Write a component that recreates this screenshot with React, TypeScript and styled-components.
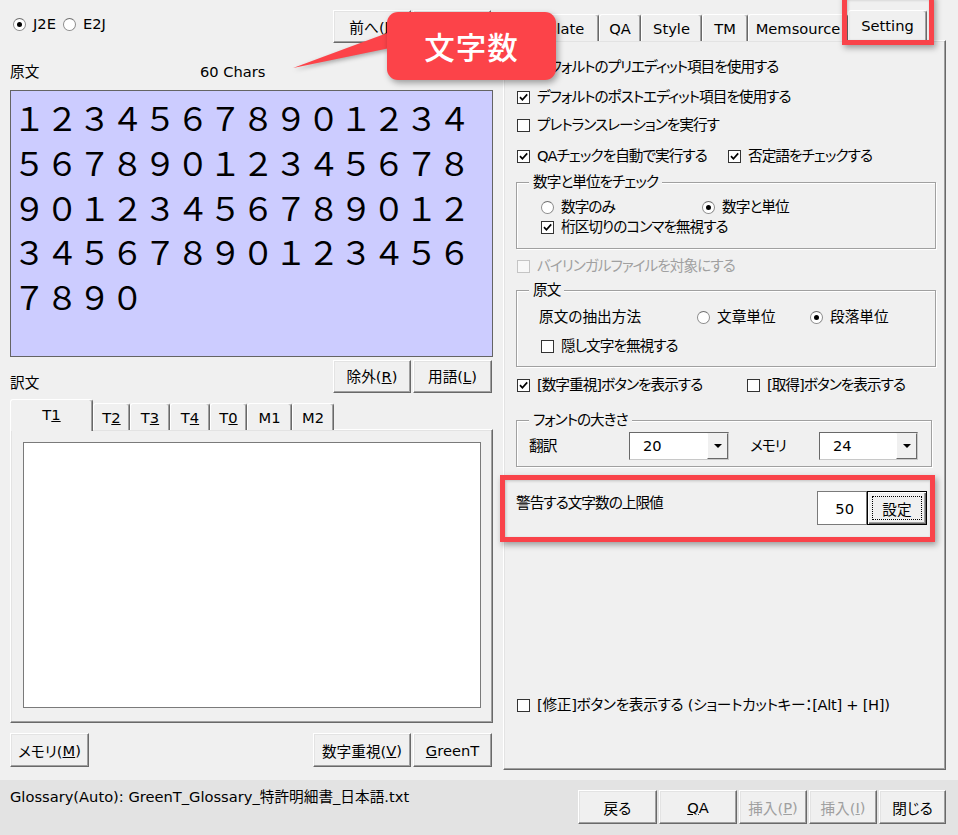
import styled, { createGlobalStyle } from 'styled-components'

const UI = `"DejaVu Sans", "Noto Sans CJK JP", sans-serif`

const GlobalStyle = createGlobalStyle`
  * { box-sizing: border-box; }
  body {
    margin: 0;
    background: #f0f0f0;
    font-family: ${UI};
    font-size: 14.67px;
    color: #000;
    font-feature-settings: "palt";
  }
`

const Root = styled.div`
  position: relative;
  width: 958px;
  height: 835px;
  overflow: hidden;
  display: flex;
  flex-direction: column;
`
const Main = styled.div`
  display: flex;
  gap: 10px;
  height: 780px;
  padding-left: 10px;
`
const LeftCol = styled.div`
  width: 483px;
  display: flex;
  flex-direction: column;
`
const TopBar = styled.div`
  height: 44px;
  padding-top: 10px;
  display: flex;
  justify-content: space-between;
  align-items: flex-start;
`
const RadioGroup = styled.div`
  display: flex;
  gap: 7px;
  margin: 4px 0 0 3px;
`
const Option = styled.label<{ $disabled?: boolean }>`
  display: flex;
  align-items: center;
  gap: 7px;
  height: 20px;
  line-height: 20px;
  white-space: nowrap;
  color: ${p => (p.$disabled ? '#a0a0a0' : '#000')};
`
const RadioCircle = styled.span<{ $on?: boolean }>`
  width: 13px;
  height: 13px;
  flex: none;
  border-radius: 50%;
  border: 1px solid #8c8c8c;
  border-top-color: #6e6e6e;
  background: #fff;
  display: inline-flex;
  align-items: center;
  justify-content: center;
  &::after {
    content: '';
    width: 5px;
    height: 5px;
    border-radius: 50%;
    background: ${p => (p.$on ? '#000' : 'transparent')};
  }
`
const Box = styled.span<{ $disabled?: boolean }>`
  width: 13px;
  height: 13px;
  flex: none;
  border: 1px solid ${p => (p.$disabled ? '#c4c4c4' : '#333')};
  background: ${p => (p.$disabled ? '#f7f7f7' : '#fff')};
  display: inline-flex;
  align-items: center;
  justify-content: center;
`
const ButtonRow = styled.div<{ $mr?: number; $mt?: number }>`
  display: flex;
  gap: 2px;
  margin-right: ${p => p.$mr ?? 0}px;
  margin-top: ${p => p.$mt ?? 0}px;
`
const Button = styled.button<{ $w: number; $h?: number; $off?: boolean }>`
  width: ${p => p.$w}px;
  height: ${p => p.$h ?? 33}px;
  margin: 0;
  padding: 0;
  font: inherit;
  font-feature-settings: "palt";
  color: ${p => (p.$off ? '#a0a0a0' : '#000')};
  background: #f0f0f0;
  border: 1px solid;
  border-color: #fff #696969 #696969 #fff;
  box-shadow: inset -1px -1px 0 #a0a0a0, inset 1px 1px 0 #e3e3e3;
  display: flex;
  align-items: center;
  justify-content: center;
  white-space: nowrap;
`
const DefaultButton = styled(Button)`
  position: relative;
  border: 1px solid #000;
  box-shadow: inset 1px 1px 0 #fff, inset -1px -1px 0 #696969, inset -2px -2px 0 #a0a0a0;
  &::after {
    content: '';
    position: absolute;
    inset: 4px;
    border: 1px dotted #000;
  }
`
const SourceHeader = styled.div`
  margin-top: 18px;
  display: grid;
  grid-template-columns: 190px 1fr;
  line-height: 20px;
`
const SourceBox = styled.div`
  margin-top: 8px;
  height: 267px;
  background: #ccccff;
  border: 1px solid #646464;
  padding: 4px 2px;
  font-family: "Noto Sans CJK JP", sans-serif;
  font-size: 32.7px;
  line-height: 44.8px;
  font-feature-settings: normal;
  word-break: break-all;
`
const TargetHeader = styled.div`
  margin-top: 3px;
  display: flex;
  justify-content: space-between;
  align-items: flex-end;
  line-height: 20px;
`
const TabStrip = styled.div<{ $h: number }>`
  height: ${p => p.$h}px;
  display: flex;
  align-items: flex-end;
  position: relative;
  z-index: 1;
  margin-bottom: -1px;
`
const Tab = styled.div<{ $w: number; $active?: boolean; $h: number }>`
  width: ${p => p.$w}px;
  height: ${p => (p.$active ? p.$h + 5 : p.$h)}px;
  margin-bottom: ${p => (p.$active ? -1 : 0)}px;
  flex: none;
  display: flex;
  align-items: center;
  justify-content: center;
  background: #f0f0f0;
  border-top: 1px solid #fff;
  border-left: 1px solid #fff;
  border-right: 1px solid #696969;
  box-shadow: inset -1px 0 0 #a0a0a0;
  border-radius: 3px 3px 0 0;
  white-space: nowrap;
  padding-bottom: ${p => (p.$active ? 2 : 0)}px;
`
const Raised = styled.div`
  border: 1px solid;
  border-color: #fff #696969 #696969 #fff;
  box-shadow: inset -1px -1px 0 #a0a0a0, inset 1px 1px 0 #e3e3e3;
`
const TabPanel = styled(Raised)`
  height: 294px;
  padding: 12px 11px 14px 12px;
`
const TextArea = styled.div`
  height: 100%;
  background: #fff;
  border: 1px solid #7a7a7a;
`
const BottomButtons = styled.div`
  margin-top: 10px;
  display: flex;
  justify-content: space-between;
`
const RightCol = styled.div`
  width: 443px;
  display: flex;
  flex-direction: column;
`
const SettingPanel = styled(Raised)`
  height: 730px;
  padding: 0 0 54px 13px;
  display: flex;
  flex-direction: column;
  letter-spacing: -1px;
`
const Row = styled.div<{ $mt?: number; $cols?: string; $ls?: number }>`
  margin-top: ${p => p.$mt ?? 0}px;
  display: grid;
  grid-template-columns: ${p => p.$cols ?? '1fr'};
  align-items: center;
  height: 20px;
  ${p => (p.$ls !== undefined ? `letter-spacing: ${p.$ls}px;` : '')}
`
const Group = styled.fieldset<{ $mt: number; $w: number }>`
  margin: ${p => p.$mt}px 0 0 -1px;
  padding: 0;
  min-width: 0;
  width: ${p => p.$w}px;
  border: 1px solid #a0a0a0;
  box-shadow: 1px 1px 0 #fff, inset 1px 1px 0 #fff;
`
const Legend = styled.legend`
  margin-left: 12px;
  padding: 0 4px;
  line-height: 20px;
  background: #f0f0f0;
`
const GroupBody = styled.div<{ $pad: string }>`
  padding: ${p => p.$pad};
`
const Label = styled.span`
  line-height: 20px;
  white-space: nowrap;
`
const SelectRow = styled.div`
  display: grid;
  grid-template-columns: 100px 100px 90px 99px;
  align-items: center;
  & > :nth-child(3) { margin-left: 21px; }
`
const SelectBox = styled.div<{ $w: number }>`
  width: ${p => p.$w}px;
  height: 28px;
  background: #fff;
  border: 1px solid;
  border-color: #696969 #c8c8c8 #c8c8c8 #696969;
  display: flex;
  align-items: center;
  padding-left: 13px;
  letter-spacing: 0;
`
const SelectValue = styled.span`
  flex: 1;
  line-height: 20px;
`
const SelectArrow = styled.span`
  width: 21px;
  height: 100%;
  background: #f0f0f0;
  border: 1px solid;
  border-color: #f0f0f0 #696969 #696969 #fff;
  display: flex;
  align-items: center;
  justify-content: center;
  &::after {
    content: '';
    border-left: 4px solid transparent;
    border-right: 4px solid transparent;
    border-top: 4px solid #000;
  }
`
const WarnRow = styled.div`
  margin: 24px 18px 0 -1px;
  display: flex;
  align-items: flex-start;
`
const WarnText = styled.span`
  flex: 1;
  line-height: 20px;
  margin-top: 2px;
`
const NumberInput = styled.div`
  width: 50px;
  height: 34px;
  background: #fff;
  border: 1px solid #7a7a7a;
  display: flex;
  align-items: center;
  justify-content: flex-end;
  padding-right: 12px;
  letter-spacing: 0;
`
const Spacer = styled.div`
  flex: 1;
`
const StatusBar = styled.div`
  height: 55px;
  background: #e3e3e3;
  display: flex;
  align-items: flex-start;
  padding: 7px 12px 0 10px;
`
const StatusText = styled.div`
  flex: 1;
  line-height: 20px;
`
const Callout = styled.div`
  position: absolute;
  z-index: 10;
  left: 387px;
  top: 12px;
  width: 169px;
  height: 68px;
  border-radius: 11px;
  background: #fc4349;
  box-shadow: 2px 3px 6px rgba(0, 0, 0, 0.35);
  color: #fff;
  font-family: "Noto Sans CJK JP", sans-serif;
  font-size: 30.5px;
  font-weight: 500;
  display: flex;
  align-items: center;
  justify-content: center;
  letter-spacing: 1px;
`
const Pointer = styled.svg`
  position: absolute;
  z-index: 10;
  left: 290px;
  top: 28px;
  filter: drop-shadow(1px 2px 2px rgba(0, 0, 0, 0.3));
`
const Highlight = styled.div<{ $x: number; $y: number; $w: number; $h: number }>`
  position: absolute;
  z-index: 10;
  left: ${p => p.$x}px;
  top: ${p => p.$y}px;
  width: ${p => p.$w}px;
  height: ${p => p.$h}px;
  border: 5px solid #f9434a;
  box-shadow: 2px 3px 6px rgba(0, 0, 0, 0.35), inset 1px 1px 3px rgba(0, 0, 0, 0.2);
`

function Check({ on, disabled }: { on?: boolean; disabled?: boolean }) {
  return (
    <Box $disabled={disabled}>
      {on && (
        <svg width="11" height="11" viewBox="0 0 11 11">
          <path d="M2 5.2 L4.4 7.8 L9.2 2.4" fill="none" stroke="#000" strokeWidth="1.7" />
        </svg>
      )}
    </Box>
  )
}

function CheckOption({ on, disabled, children }: { on?: boolean; disabled?: boolean; children: React.ReactNode }) {
  return (
    <Option $disabled={disabled}>
      <Check on={on} disabled={disabled} />
      {children}
    </Option>
  )
}

function RadioOption({ on, children }: { on?: boolean; children: React.ReactNode }) {
  return (
    <Option>
      <RadioCircle $on={on} />
      {children}
    </Option>
  )
}

function Select({ value, w }: { value: string; w: number }) {
  return (
    <SelectBox $w={w}>
      <SelectValue>{value}</SelectValue>
      <SelectArrow />
    </SelectBox>
  )
}

const SOURCE = '１２３４５６７８９０'.repeat(6)

const topTabs = [
  { label: 'Translate', w: 96 },
  { label: 'QA', w: 42 },
  { label: 'Style', w: 61 },
  { label: 'TM', w: 46 },
  { label: 'Memsource', w: 100 },
  { label: 'Setting', w: 79, active: true },
]

const targetTabs = [
  { t: 'T', k: '1', w: 83, active: true },
  { t: 'T', k: '2', w: 37 },
  { t: 'T', k: '3', w: 40 },
  { t: 'T', k: '4', w: 40 },
  { t: 'T', k: '0', w: 37 },
  { t: 'M1', k: '', w: 45 },
  { t: 'M2', k: '', w: 42 },
]

export default function App() {
  return (
    <Root>
      <GlobalStyle />
      <Main>
        <LeftCol>
          <TopBar>
            <RadioGroup>
              <RadioOption on>J2E</RadioOption>
              <RadioOption>E2J</RadioOption>
            </RadioGroup>
            <ButtonRow $mr={2}>
              <Button $w={78}>前へ(<u>J</u>)</Button>
              <Button $w={78}>次へ(<u>K</u>)</Button>
            </ButtonRow>
          </TopBar>

          <SourceHeader>
            <Label>原文</Label>
            <Label>60 Chars</Label>
          </SourceHeader>
          <SourceBox>{SOURCE}</SourceBox>

          <TargetHeader>
            <Label>訳文</Label>
            <ButtonRow $mr={1}>
              <Button $w={78}>除外(<u>R</u>)</Button>
              <Button $w={79}>用語(<u>L</u>)</Button>
            </ButtonRow>
          </TargetHeader>

          <TabStrip $h={37}>
            {targetTabs.map(tab => (
              <Tab key={tab.t + tab.k} $w={tab.w} $h={27} $active={tab.active}>
                {tab.t}
                {tab.k && <u>{tab.k}</u>}
              </Tab>
            ))}
          </TabStrip>
          <TabPanel>
            <TextArea />
          </TabPanel>

          <BottomButtons>
            <Button $w={79} $h={34}>メモリ(<u>M</u>)</Button>
            <ButtonRow $mr={1}>
              <Button $w={98} $h={34}>数字重視(<u>V</u>)</Button>
              <Button $w={79} $h={34}><u>G</u>reenT</Button>
            </ButtonRow>
          </BottomButtons>
        </LeftCol>

        <RightCol>
          <TabStrip $h={41}>
            {topTabs.map(tab => (
              <Tab key={tab.label} $w={tab.w} $h={27} $active={tab.active}>
                {tab.label}
              </Tab>
            ))}
          </TabStrip>
          <SettingPanel>
            <Row $mt={16}>
              <CheckOption on>デフォルトのプリエディット項目を使用する</CheckOption>
            </Row>
            <Row $mt={10}>
              <CheckOption on>デフォルトのポストエディット項目を使用する</CheckOption>
            </Row>
            <Row $mt={8}>
              <CheckOption>プレトランスレーションを実行す</CheckOption>
            </Row>
            <Row $mt={11} $cols="211px 1fr">
              <CheckOption on>QAチェックを自動で実行する</CheckOption>
              <CheckOption on>否定語をチェックする</CheckOption>
            </Row>

            <Group $mt={6} $w={420}>
              <Legend>数字と単位をチェック</Legend>
              <GroupBody $pad="5px 0 11px 24px">
                <Row $cols="161px 1fr">
                  <RadioOption>数字のみ</RadioOption>
                  <RadioOption on>数字と単位</RadioOption>
                </Row>
                <Row>
                  <CheckOption on>桁区切りのコンマを無視する</CheckOption>
                </Row>
              </GroupBody>
            </Group>

            <Row $mt={7}>
              <CheckOption disabled>バイリンガルファイルを対象にする</CheckOption>
            </Row>

            <Group $mt={4} $w={420}>
              <Legend>原文</Legend>
              <GroupBody $pad="7px 0 10px 22px">
                <Row $cols="158px 113px 1fr" $ls={0}>
                  <Label>原文の抽出方法</Label>
                  <RadioOption>文章単位</RadioOption>
                  <RadioOption on>段落単位</RadioOption>
                </Row>
                <Row $mt={9} $cols="2px 1fr">
                  <span />
                  <CheckOption>隠し文字を無視する</CheckOption>
                </Row>
              </GroupBody>
            </Group>

            <Row $mt={8} $cols="230px 1fr">
              <CheckOption on>[数字重視]ボタンを表示する</CheckOption>
              <CheckOption>[取得]ボタンを表示する</CheckOption>
            </Row>

            <Group $mt={15} $w={416}>
              <Legend>フォントの大きさ</Legend>
              <GroupBody $pad="2px 0 6px 12px">
                <SelectRow>
                  <Label>翻訳</Label>
                  <Select value="20" w={100} />
                  <Label>メモリ</Label>
                  <Select value="24" w={99} />
                </SelectRow>
              </GroupBody>
            </Group>

            <WarnRow>
              <WarnText>警告する文字数の上限値</WarnText>
              <NumberInput>50</NumberInput>
              <DefaultButton $w={60} $h={34}>設定</DefaultButton>
            </WarnRow>

            <Spacer />
            <Row $ls={-0.3}>
              <CheckOption>[修正]ボタンを表示する (ショートカットキー：[Alt] + [H])</CheckOption>
            </Row>
          </SettingPanel>
        </RightCol>
      </Main>

      <StatusBar>
        <StatusText>Glossary(Auto): GreenT_Glossary_特許明細書_日本語.txt</StatusText>
        <ButtonRow $mt={3}>
          <Button $w={79} $h={34}>戻る</Button>
          <Button $w={78} $h={34}><u>Q</u>A</Button>
          <Button $w={68} $h={34} $off>挿入(<u>P</u>)</Button>
          <Button $w={68} $h={34} $off>挿入(<u>I</u>)</Button>
          <Button $w={67} $h={34}>閉じる</Button>
        </ButtonRow>
      </StatusBar>

      <Pointer width="100" height="45" viewBox="0 0 100 45">
        <polygon points="3,40 100,4 100,20" fill="#fc4349" />
      </Pointer>
      <Callout>文字数</Callout>
      <Highlight $x={842} $y={-6} $w={92} $h={51} />
      <Highlight $x={500} $y={475} $w={435} $h={67} />
    </Root>
  )
}
